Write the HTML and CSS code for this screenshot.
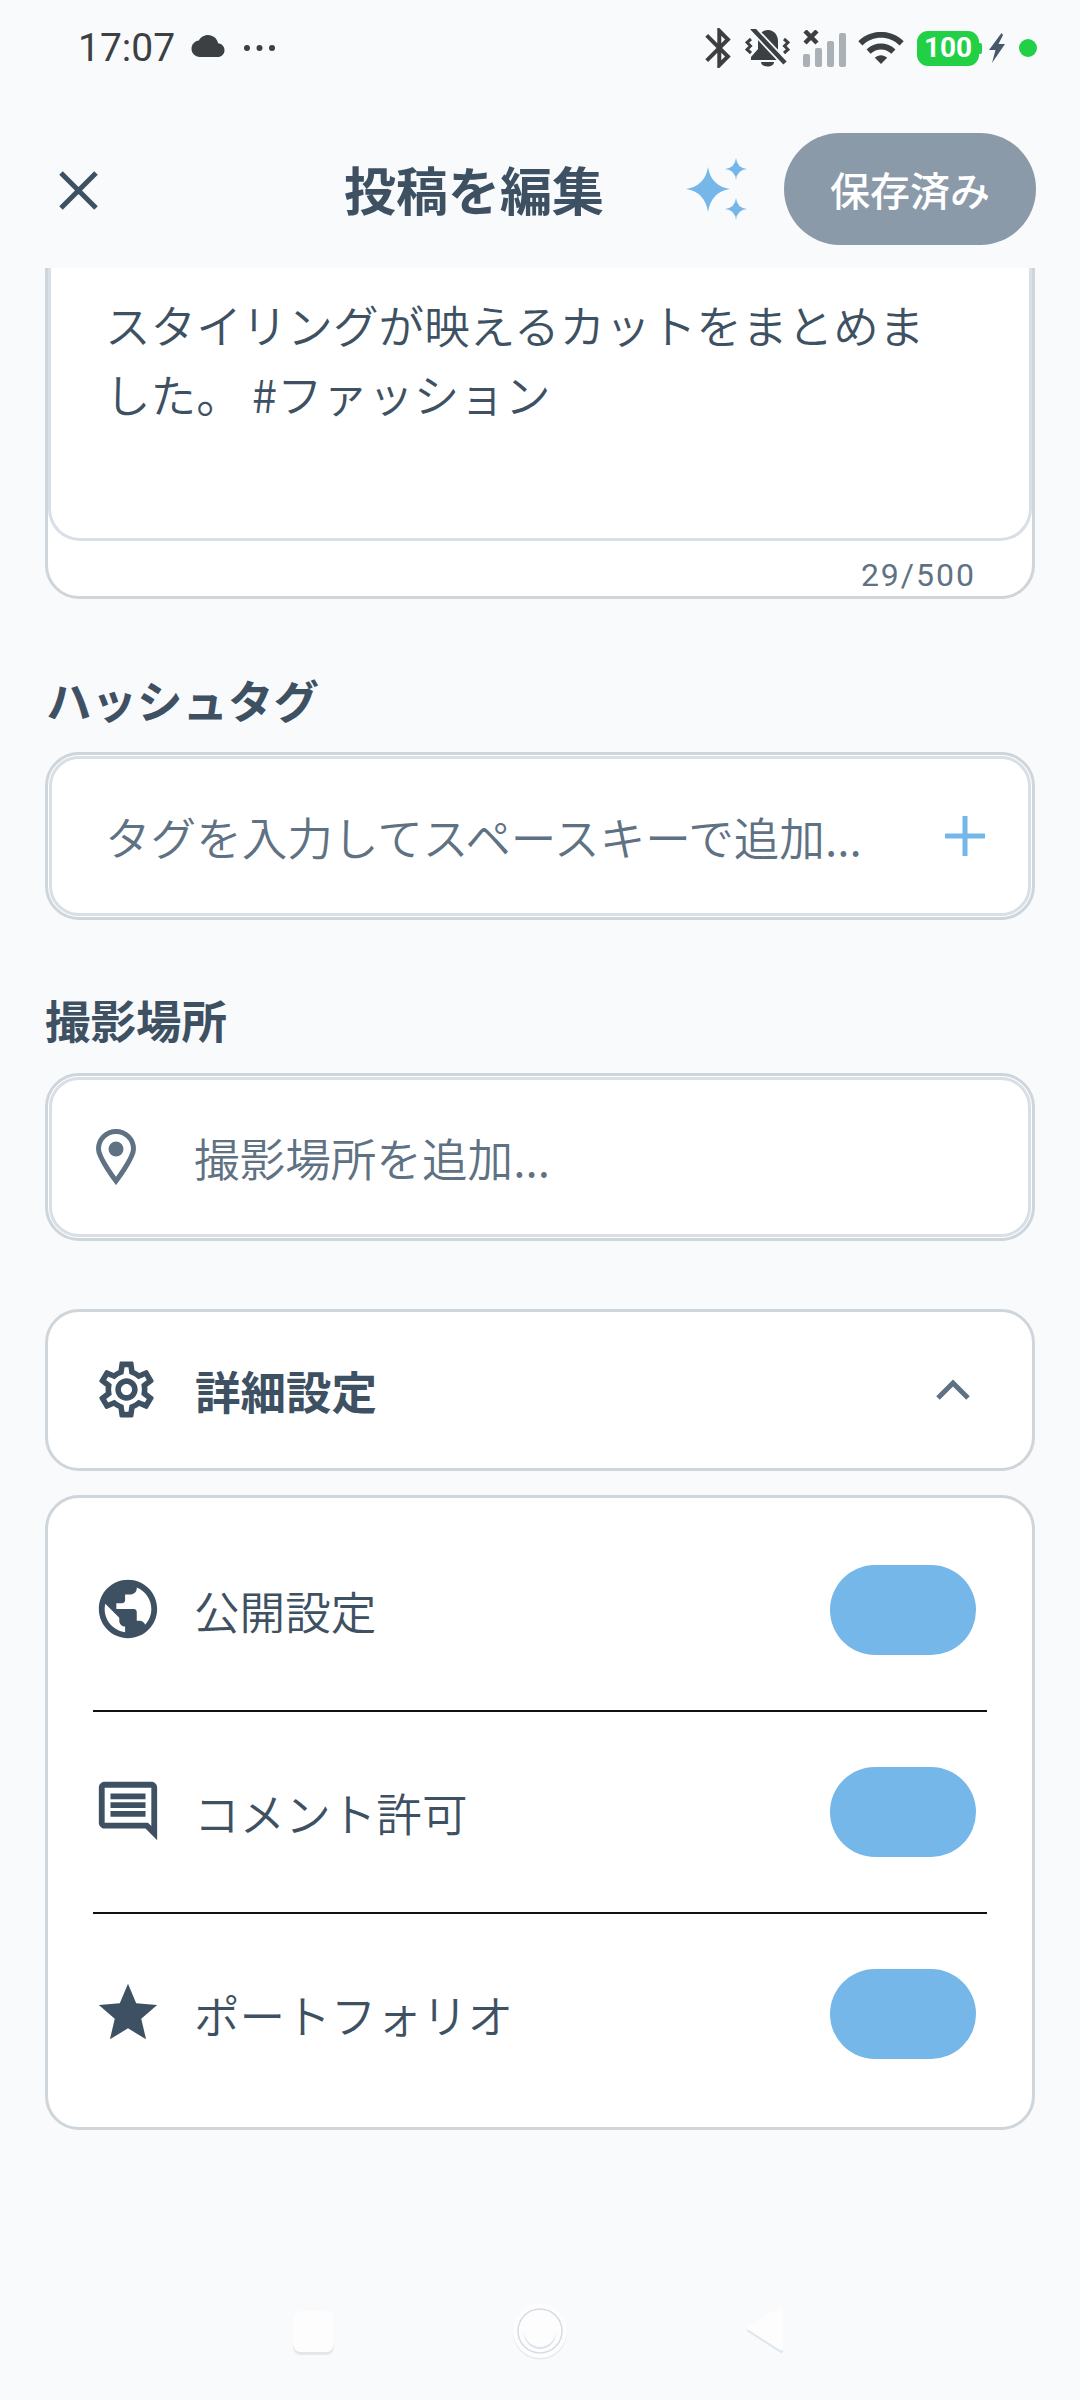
FILE: index.html
```html
<!DOCTYPE html>
<html lang="ja">
<head>
<meta charset="utf-8">
<title>投稿を編集</title>
<link rel="stylesheet" href="styles.css">
</head>
<body>
<div class="page">
  <div class="status">
    <div class="status-left">
      <span class="time">17:07</span>
      <svg class="ic-cloud" viewBox="0 4 24 16"><path d="M19.35 10.04C18.67 6.59 15.64 4 12 4 9.11 4 6.6 5.64 5.35 8.04 2.34 8.36 0 10.91 0 14c0 3.31 2.69 6 6 6h13c2.76 0 5-2.24 5-5 0-2.64-2.05-4.78-4.65-4.96z"/></svg>
      <svg class="ic-dots" viewBox="0 0 31 6"><circle cx="3" cy="3" r="3"/><circle cx="15.5" cy="3" r="3"/><circle cx="28" cy="3" r="3"/></svg>
    </div>
    <div class="status-right">
      <svg class="ic-bt" viewBox="5 2 12.7 20"><path d="M17.71 7.71L12 2h-1v7.59L6.41 5 5 6.41 10.59 12 5 17.59 6.41 19 11 14.41V22h1l5.71-5.71-4.3-4.29 4.3-4.29zM13 5.83l1.88 1.88L13 9.59V5.83zm1.88 10.46L13 18.17v-3.76l1.88 1.88z"/></svg>
      <svg class="ic-bell" viewBox="0 0 45 39"><path d="M23 1c-6 0-10 5-10 11v8l-7 8v3h31v-3l-4-5v-11c0-6-4-11-10-11z"/><path d="M16 33h13c0 6-13 6-13 0z"/><path class="slash-gap" d="M7 -1L40 34"/><path class="slash" d="M7 -1L40 34"/><path class="zig" d="M6 10L2 13.500 5.500 17 2 20.500 6 24M39 10L43 13.500 39.500 17 43 20.500 39 24"/></svg>
      <svg class="ic-signal" viewBox="0 0 43 37"><rect class="bar" x="0" y="24" width="7" height="13" rx="2"/><rect class="bar" x="12" y="18" width="7" height="19" rx="2"/><rect class="bar" x="24" y="11" width="7" height="26" rx="2"/><rect class="bar" x="36" y="3" width="7" height="34" rx="2"/><path class="cross" d="M2 1l12 12M14 1L2 13"/></svg>
      <svg class="ic-wifi" viewBox="1 4.5 22 15.5"><path d="M1 9l2 2c4.97-4.97 13.03-4.97 18 0l2-2C16.93 2.93 7.08 2.93 1 9zm8 8l3 3 3-3c-1.65-1.66-4.34-1.66-6 0zm-4-4l2 2c2.76-2.76 7.24-2.76 10 0l2-2C15.14 9.14 8.87 9.14 5 13z"/></svg>
      <div class="battery"><span>100</span></div>
      <svg class="ic-bolt" viewBox="0 0 16 30"><path d="M12.500 0L0 17h6.500L3 30 16 11H9.500L14 2z"/></svg>
      <span class="dot"></span>
    </div>
  </div>

  <div class="header">
    <svg class="ic-close" viewBox="0 0 39 39"><path d="M2 2l35 35M37 2L2 37"/></svg>
    <h1 class="title">投稿を編集</h1>
    <svg class="ic-spark" viewBox="0 0 62 62"><path d="M22 9Q25 28 44 31 25 34 22 54 19 34 0 31 19 28 22 9z"/><path d="M50 0Q51 10 61 11 51 12 50 22 49 12 39 11 49 10 50 0z"/><path d="M50 40Q51 50 61 51 51 52 50 62 49 52 39 51 49 50 50 40z"/></svg>
    <button class="save">保存済み</button>
  </div>

  <div class="scroll">
    <div class="content">
      <div class="text-card">
        <div class="text-inner">スタイリングが映えるカットをまとめました。 #ファッション</div>
        <div class="counter">29/500</div>
      </div>

      <div class="label label-tag">ハッシュタグ</div>
      <div class="field field-tag">
        <div class="field-inner">
          <span class="placeholder">タグを入力してスペースキーで追加...</span>
          <svg class="ic-plus" viewBox="0 0 40 40"><path d="M20 0v40M0 20h40"/></svg>
        </div>
      </div>

      <div class="label label-place">撮影場所</div>
      <div class="field field-place">
        <div class="field-inner">
          <svg class="ic-pin" viewBox="0 0 40 56"><path class="pin-o" d="M20 2.5C10.5 2.5 2.5 10 2.5 20c0 9 17.5 32 17.5 32s17.5-23 17.5-32C37.5 10 29.5 2.5 20 2.5z"/><circle cx="20" cy="20" r="7.500"/></svg>
          <span class="placeholder">撮影場所を追加...</span>
        </div>
      </div>

      <div class="adv-head">
        <svg class="ic-gear" viewBox="0 0 24 24"><path d="M19.43 12.98c.04-.32.07-.64.07-.98 0-.34-.03-.66-.07-.98l2.11-1.65c.19-.15.24-.42.12-.64l-2-3.46c-.09-.16-.26-.25-.44-.25-.06 0-.12.01-.17.03l-2.49 1c-.52-.4-1.08-.73-1.69-.98l-.38-2.65C14.46 2.18 14.25 2 14 2h-4c-.25 0-.46.18-.49.42l-.38 2.65c-.61.25-1.17.59-1.69.98l-2.49-1c-.06-.02-.12-.03-.18-.03-.17 0-.34.09-.43.25l-2 3.46c-.13.22-.07.49.12.64l2.11 1.65c-.04.32-.07.65-.07.98 0 .33.03.66.07.98l-2.11 1.65c-.19.15-.24.42-.12.64l2 3.46c.09.16.26.25.44.25.06 0 .12-.01.17-.03l2.49-1c.52.4 1.08.73 1.69.98l.38 2.65c.03.24.24.42.49.42h4c.25 0 .46-.18.49-.42l.38-2.65c.61-.25 1.17-.59 1.69-.98l2.49 1c.06.02.12.03.18.03.17 0 .34-.09.43-.25l2-3.46c.12-.22.07-.49-.12-.64l-2.11-1.65zm-1.98-1.71c.04.31.05.52.05.73 0 .21-.02.43-.05.73l-.14 1.13.89.7 1.08.84-.7 1.21-1.27-.51-1.04-.42-.9.68c-.43.32-.84.56-1.25.73l-1.06.43-.16 1.13-.2 1.35h-1.4l-.19-1.35-.16-1.13-1.06-.43c-.43-.18-.83-.41-1.23-.71l-.91-.7-1.06.43-1.27.51-.7-1.21 1.08-.84.89-.7-.14-1.13c-.03-.31-.05-.54-.05-.74s.02-.43.05-.73l.14-1.13-.89-.7-1.08-.84.7-1.21 1.27.51 1.04.42.9-.68c.43-.32.84-.56 1.25-.73l1.06-.43.16-1.13.2-1.35h1.39l.19 1.35.16 1.13 1.06.43c.43.18.83.41 1.23.71l.91.7 1.06-.43 1.27-.51.7 1.21-1.07.85-.89.7.14 1.13zM12 8c-2.21 0-4 1.79-4 4s1.79 4 4 4 4-1.79 4-4-1.79-4-4-4zm0 6c-1.1 0-2-.9-2-2s.9-2 2-2 2 .9 2 2-.9 2-2 2z"/></svg>
        <span class="adv-title">詳細設定</span>
        <svg class="ic-chev" viewBox="0 0 34 22"><path d="M2 19L17 4l15 15"/></svg>
      </div>

      <div class="panel">
        <div class="row">
          <svg class="ic-row" viewBox="0 0 24 24"><path d="M12 2C6.48 2 2 6.48 2 12s4.48 10 10 10 10-4.48 10-10S17.52 2 12 2zm-1 17.93c-3.95-.49-7-3.85-7-7.93 0-.62.08-1.21.21-1.79L9 15v1c0 1.1.9 2 2 2v1.93zm6.9-2.54c-.26-.81-1-1.39-1.9-1.39h-1v-3c0-.55-.45-1-1-1H8v-2h2c.55 0 1-.45 1-1V7h2c1.1 0 2-.9 2-2v-.41c2.93 1.19 5 4.06 5 7.41 0 2.08-.8 3.97-2.1 5.39z"/></svg>
          <span class="row-text">公開設定</span>
          <span class="toggle"></span>
        </div>
        <div class="divider"></div>
        <div class="row">
          <svg class="ic-row" viewBox="0 0 24 24"><path d="M21.99 4c0-1.1-.89-2-1.99-2H4c-1.1 0-2 .9-2 2v12c0 1.1.9 2 2 2h14l4 4-.01-18zM20 4v13.17L18.83 16H4V4h16zM6 12h12v2H6zm0-3h12v2H6zm0-3h12v2H6z"/></svg>
          <span class="row-text">コメント許可</span>
          <span class="toggle"></span>
        </div>
        <div class="divider"></div>
        <div class="row">
          <svg class="ic-row" viewBox="0 0 24 24"><path d="M12 17.27L18.18 21l-1.64-7.03L22 9.24l-7.19-.61L12 2 9.19 8.63 2 9.24l5.46 4.73L5.82 21z"/></svg>
          <span class="row-text">ポートフォリオ</span>
          <span class="toggle"></span>
        </div>
      </div>
    </div>
  </div>

  <div class="nav">
    <span class="nav-square"></span>
    <svg class="nav-circle" viewBox="0 0 58 58"><circle class="c-shadow" cx="29" cy="30.500" r="27"/><circle class="c-white" cx="29" cy="29" r="27"/><circle class="c-ring" cx="29" cy="29" r="22"/><circle class="c-shadow2" cx="29" cy="31" r="16"/><circle class="c-white" cx="29" cy="29" r="16"/></svg>
    <svg class="nav-tri" viewBox="0 0 38 52"><path class="t-shadow" d="M37 6v40c0 2-1 2.500-3 1.500L2 27c-1.500-1-1.500-2 0-3L34 4.500c2-1 3-.5 3 1.500z"/><path class="t-white" d="M37 3.500v40c0 2-1 2.500-3 1.500L2 24.500c-1.500-1-1.500-2 0-3L34 2c2-1 3-.5 3 1.500z"/></svg>
  </div>
</div>
</body>
</html>
```

FILE: styles.css
```css
* { box-sizing: border-box; }
html, body { margin: 0; padding: 0; }
body {
  background: #f9fafc;
  color: #3e5163;
  font-family: "Noto Sans CJK JP", "Noto Sans", sans-serif;
}
svg { display: block; flex: none; fill: currentColor; }

.page { width: 1080px; height: 2400px; display: flex; flex-direction: column; overflow: hidden; }

/* status bar */
.status { height: 96px; flex: none; display: flex; align-items: center; justify-content: space-between; padding: 0 43px 0 78px; color: #3c4043; }
.status-left, .status-right { display: flex; align-items: center; }
.time { font-family: Roboto, sans-serif; font-size: 39px; line-height: 44px; width: 96px; }
.ic-cloud { width: 34px; height: 22px; margin-left: 17px; margin-top: -4px; }
.ic-dots { width: 31px; height: 6px; margin-left: 19px; }
.ic-bt { width: 26px; height: 40px; }
.ic-bell { width: 45px; height: 39px; margin-left: 14px; }
.ic-bell .slash { fill: none; stroke: #3c4043; stroke-width: 4.500; }
.ic-bell .slash-gap { fill: none; stroke: #f9fafc; stroke-width: 8; }
.ic-bell .zig { fill: none; stroke: #3c4043; stroke-width: 3; }
.ic-signal { width: 43px; height: 37px; margin-left: 13px; }
.bar { fill: #a9b0b6; }
.cross { fill: none; stroke: #3c4043; stroke-width: 4.500; }
.ic-wifi { width: 46px; height: 32px; margin-left: 12px; }
.battery { width: 62px; height: 35px; margin-left: 13px; background: #22d046; border-radius: 11px; display: flex; align-items: center; justify-content: center; position: relative; }
.battery::after { content: ""; position: absolute; right: -3px; top: 12px; width: 3px; height: 11px; background: #22d046; border-radius: 0 2px 2px 0; }
.battery span { color: #fff; font-family: Roboto, sans-serif; font-weight: 700; font-size: 28px; line-height: 32px; }
.ic-bolt { width: 16px; height: 30px; margin-left: 10px; color: #46586a; }
.dot { width: 18px; height: 18px; margin-left: 14px; border-radius: 50%; background: #22d046; }

/* header */
.header { height: 172px; flex: none; display: flex; align-items: center; padding: 14px 44px 0 59px; }
.ic-close { width: 39px; height: 39px; fill: none; stroke: #3e5163; stroke-width: 5; margin-top: 2px; }
.title { margin: 0 0 0 246px; font-size: 52px; line-height: 70px; font-weight: 700; color: #3e5163; white-space: nowrap; }
.ic-spark { width: 62px; height: 62px; margin-left: auto; color: #74b7e8; }
.save { width: 252px; height: 112px; margin-left: 36px; padding: 0; border: 0; border-radius: 56px; background: #8b9aa9; color: #fff; font-family: inherit; font-size: 40px; font-weight: 500; }

/* scroll area */
.scroll { flex: 1; overflow: hidden; }
.content { margin-top: -40px; padding: 0 45px; }

.text-card { height: 371px; background: #fff; border: 3px solid #ced5db; border-radius: 34px; }
.text-inner { height: 310px; padding: 59px 70px 0 54px; background: #fff; border: solid #d8dfe6; border-width: 0 3px 3px; border-radius: 0 0 32px 32px; font-size: 45.600px; font-weight: 350; line-height: 69px; }
.counter { margin-top: 14px; padding-right: 56px; text-align: right; font-size: 32px; line-height: 40px; letter-spacing: 2px; color: #5f7284; font-family: Roboto, sans-serif; }

.label { font-size: 45.500px; line-height: 60px; font-weight: 700; color: #3e5163; }
.label-tag { margin-top: 70px; margin-left: 1px; }
.label-place { margin-top: 69px; }

.field { height: 168px; padding: 1px; background: #fff; border: 3px solid #ced5db; border-radius: 34px; }
.field-tag { margin-top: 23px; }
.field-place { margin-top: 24px; }
.field-inner { height: 100%; display: flex; align-items: center; border: 3px solid #d8dfe6; border-radius: 30px; }
.field-tag .field-inner { padding: 0 43px 0 53px; justify-content: space-between; }
.field-place .field-inner { padding-left: 44px; }
.placeholder { font-size: 45.600px; font-weight: 350; line-height: 60px; color: #5f7284; white-space: nowrap; }
.ic-plus { width: 40px; height: 40px; fill: none; stroke: #74b7e8; stroke-width: 5; }
.ic-pin { width: 40px; height: 56px; margin-right: 58px; color: #5f7284; }
.pin-o { fill: none; stroke: #5f7284; stroke-width: 5; }

.adv-head { margin-top: 68px; height: 162px; display: flex; align-items: center; padding: 0 62px 0 45px; background: #fff; border: 3px solid #ced5db; border-radius: 34px; }
.ic-gear { width: 67px; height: 67px; margin-top: -2px; color: #3e5163; }
.adv-title { margin-left: 35px; font-size: 45.500px; line-height: 60px; font-weight: 700; color: #3e5163; }
.ic-chev { width: 34px; height: 22px; margin-left: auto; fill: none; stroke: #5f7284; stroke-width: 5; }

.panel { margin-top: 24px; padding: 12px 45px 13px; background: #fff; border: 3px solid #ced5db; border-radius: 34px; }
.row { height: 200px; display: flex; align-items: center; padding: 0 11px 0 0; }
.ic-row { width: 70px; height: 70px; color: #3e5163; margin-top: -2px; }
.row-text { margin-left: 31px; font-size: 45.600px; font-weight: 350; line-height: 60px; color: #3e5163; }
.toggle { width: 146px; height: 90px; margin-left: auto; border-radius: 45px; background: #74b7e8; }
.divider { height: 2px; background: #111; }

/* navigation */
.nav { height: 138px; flex: none; display: flex; align-items: center; justify-content: center; padding-right: 3px; }
.nav-square { width: 41px; height: 41px; border-radius: 8px; background: #fdfdfe; box-shadow: 0 3px 1px #e2e7ec; }
.nav-circle { width: 58px; height: 58px; margin-left: 177px; }
.c-shadow { fill: #e4e9ee; }
.c-shadow2 { fill: #dbe2e8; }
.c-white { fill: #fdfdfe; }
.c-ring { fill: none; stroke: #d5dce3; stroke-width: 1.500; }
.nav-tri { width: 38px; height: 52px; margin-left: 177px; }
.t-shadow { fill: #e0e6eb; }
.t-white { fill: #fdfdfe; }
```
